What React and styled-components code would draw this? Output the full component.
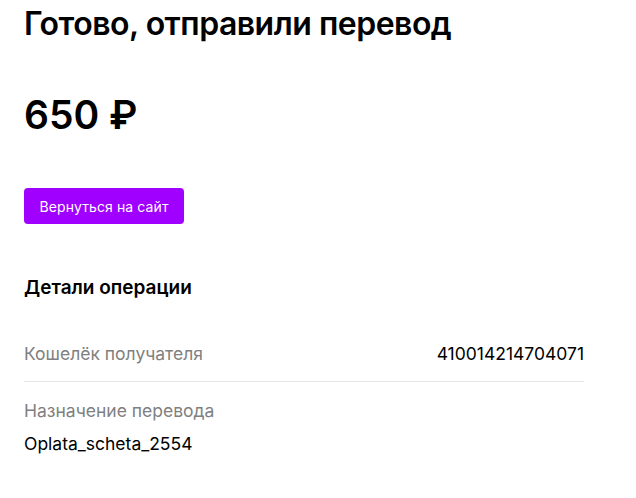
import React from "react";
import styled, { createGlobalStyle } from "styled-components";

const Global = createGlobalStyle`
  html, body { margin: 0; padding: 0; background: #fff; }
  body { font-family: Inter, "Noto Sans", sans-serif; color: #000; }
`;

const Page = styled.main`
  width: 560px;
  padding: 0 24px;
  display: flex;
  flex-direction: column;
`;

const Title = styled.h1`
  margin: 0;
  padding-top: 4px;
  font-size: 32px;
  line-height: 40px;
  font-weight: 600;
  letter-spacing: -0.5px;
`;

const Amount = styled.div`
  margin-top: 48px;
  font-size: 39px;
  line-height: 46px;
  font-weight: 600;
`;

const Button = styled.button`
  margin-top: 50px;
  align-self: flex-start;
  height: 36px;
  width: 160px;
  border: 0;
  border-radius: 4px;
  background: #a000ff;
  color: #fff;
  font-family: inherit;
  font-size: 14px;
  letter-spacing: 0.1px;
  padding: 0;
  cursor: pointer;
`;

const SectionTitle = styled.h2`
  margin: 52px 0 0;
  font-size: 19px;
  line-height: 24px;
  font-weight: 600;
`;

const Details = styled.dl`
  margin: 30px 0 0;
  display: flex;
  flex-direction: column;
`;

const Row = styled.div`
  display: flex;
  flex-direction: ${(p) => (p.$stacked ? "column" : "row")};
  justify-content: space-between;
  gap: ${(p) => (p.$stacked ? "9px" : "0")};
  padding: ${(p) => (p.$stacked ? "17px 0 12px" : "12px 0 15px")};
  border-bottom: ${(p) => (p.$last ? "none" : "1px solid #e6e6e6")};
`;

const Label = styled.dt`
  font-size: 17.5px;
  line-height: 24px;
  color: #808080;
`;

const Value = styled.dd`
  margin: 0;
  font-size: 17.5px;
  line-height: 24px;
  color: #000;
`;

export default function App() {
  return (
    <>
      <Global />
      <Page>
        <Title>Готово, отправили перевод</Title>
        <Amount>650 ₽</Amount>
        <Button>Вернуться на сайт</Button>
        <SectionTitle>Детали операции</SectionTitle>
        <Details>
          <Row>
            <Label>Кошелёк получателя</Label>
            <Value>410014214704071</Value>
          </Row>
          <Row $stacked $last>
            <Label>Назначение перевода</Label>
            <Value>Oplata_scheta_2554</Value>
          </Row>
        </Details>
      </Page>
    </>
  );
}
